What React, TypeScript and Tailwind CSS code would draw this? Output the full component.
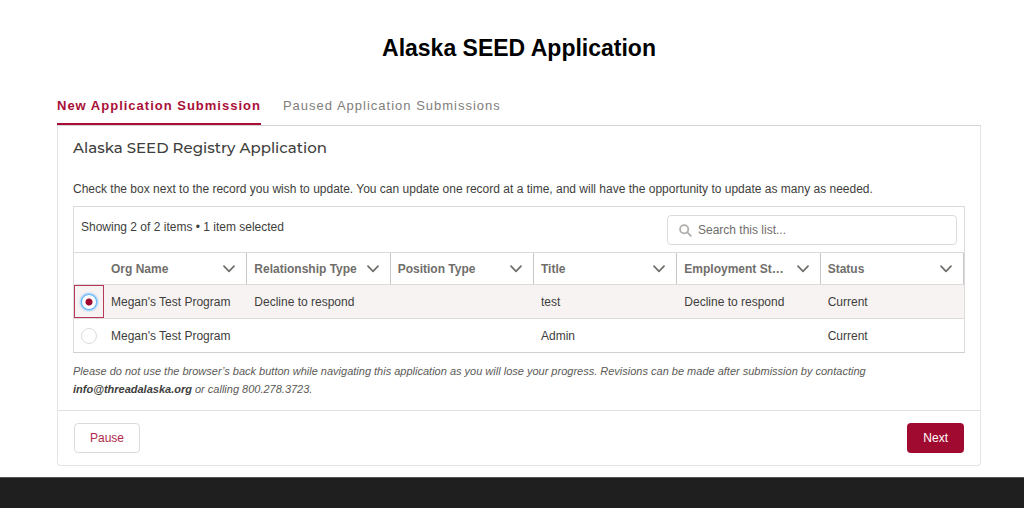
import { useState } from 'react'

const columns = [
  'Org Name',
  'Relationship Type',
  'Position Type',
  'Title',
  'Employment St…',
  'Status',
]

const records = [
  {
    id: 'record-1',
    cells: ["Megan's Test Program", 'Decline to respond', '', 'test', 'Decline to respond', 'Current'],
  },
  {
    id: 'record-2',
    cells: ["Megan's Test Program", '', '', 'Admin', '', 'Current'],
  },
]

function Chevron() {
  return (
    <svg viewBox="0 0 12 8" className="h-2 w-3" fill="none" stroke="#706e6b" strokeWidth="1.7" aria-hidden="true">
      <path d="M1 1.2 L6 6.3 L11 1.2" strokeLinecap="round" strokeLinejoin="round" />
    </svg>
  )
}

function SearchIcon() {
  return (
    <svg viewBox="0 0 13 13" className="h-[13px] w-[13px] shrink-0" fill="none" stroke="#b0adab" strokeWidth="1.8" aria-hidden="true">
      <circle cx="5.2" cy="5.2" r="4.1" />
      <path d="M8.4 8.4 L11.8 11.8" strokeLinecap="round" />
    </svg>
  )
}

export default function App() {
  const [selected, setSelected] = useState('record-1')

  return (
    <div className="flex min-h-screen flex-col bg-white font-['Liberation_Sans',Arial,sans-serif] text-[#3e3e3c]">
      <main className="pt-8 pr-[43px] pb-[11px] pl-[57px]">
        <h1 className="text-center text-[23px] leading-8 font-bold text-black">Alaska SEED Application</h1>

        {/* Tabs */}
        <nav className="mt-[22px] flex gap-[22px] border-b border-[#d4d4d4] text-[13px]">
          <a
            href="#new"
            className="border-b-2 border-[#a90e37] pt-2.5 pb-[7px] leading-5 font-bold tracking-[1px] text-[#a90e37]"
          >
            New Application Submission
          </a>
          <a href="#paused" className="pt-2.5 pb-[7px] leading-5 tracking-[1px] text-[#807e7b]">
            Paused Application Submissions
          </a>
        </nav>

        {/* Application card */}
        <section className="rounded-b border border-t-0 border-[#e4e4e4]">
          <div className="px-[15px] py-3">
            <h2 className="font-[Montserrat,Inter,sans-serif] text-[15px] leading-5 font-medium">
              Alaska SEED Registry Application
            </h2>
            <p className="mt-[21px] text-xs leading-5">
              Check the box next to the record you wish to update. You can update one record at a time, and will
              have the opportunity to update as many as needed.
            </p>

            <div className="mt-[7px] border border-[#dddbda] border-b-[#d0d0d0]">
              <div className="flex items-center justify-between px-[7px] pt-2 pb-[7px]">
                <p className="pb-1.5 text-xs leading-5">Showing 2 of 2 items • 1 item selected</p>
                <label className="flex h-[30px] w-[290px] items-center gap-1.5 rounded border border-[#dddbda] px-[11px]">
                  <SearchIcon />
                  <input
                    type="text"
                    aria-label="Search this list"
                    placeholder="Search this list..."
                    className="min-w-0 flex-1 text-xs outline-none placeholder:text-[#706e6b]"
                  />
                </label>
              </div>

              <table className="w-full table-fixed border-collapse text-left text-xs">
                <thead>
                  <tr className="border-y border-[#dddbda]">
                    <th className="w-[30px]" aria-label="Select" />
                    {columns.map((column) => (
                      <th key={column} className="h-8 p-0 font-bold text-[#706e6b]">
                        <div className="flex h-[31px] items-center justify-between border-r border-[#c9c7c5] pr-[11px] pl-[7px]">
                          <span className="whitespace-nowrap">{column}</span>
                          <button type="button" className="shrink-0" aria-label={`${column} actions`}>
                            <Chevron />
                          </button>
                        </div>
                      </th>
                    ))}
                  </tr>
                </thead>
                <tbody>
                  {records.map((record) => {
                    const active = record.id === selected
                    return (
                      <tr
                        key={record.id}
                        className={active ? 'border-b border-[#dddbda] bg-[#f8f3f3]' : ''}
                      >
                        <td className="p-0">
                          <div
                            className={
                              active
                                ? 'flex h-[33px] items-center justify-center border border-[#b8385a]'
                                : 'flex h-[33px] items-center justify-center'
                            }
                          >
                            <input
                              type="radio"
                              name="record"
                              aria-label={`Select row ${record.id}`}
                              checked={active}
                              onChange={() => setSelected(record.id)}
                              className="h-4 w-4 appearance-none rounded-full border border-[#dddbda] bg-white checked:border-[#5eb4ff] checked:bg-[radial-gradient(circle,#a00a30_3px,#ffffff_4px)] checked:shadow-[0_0_3px_#1b96ff]"
                            />
                          </div>
                        </td>
                        {record.cells.map((cell, i) => (
                          <td key={columns[i]} className="px-[7px] py-0 whitespace-nowrap">
                            {cell}
                          </td>
                        ))}
                      </tr>
                    )
                  })}
                </tbody>
              </table>
            </div>

            <p className="mt-[9px] text-[11px] leading-[18px] text-[#5c5a58] italic">
              Please do not use the browser’s back button while navigating this application as you will lose your
              progress. Revisions can be made after submission by contacting{' '}
              <a href="mailto:info@threadalaska.org" className="font-bold text-[#3e3e3c]">
                info@threadalaska.org
              </a>{' '}
              or calling 800.278.3723.
            </p>
          </div>

          <div className="flex justify-between border-t border-[#e0e0e0] px-4 py-3">
            <button
              type="button"
              className="h-[30px] rounded border border-[#dddbda] bg-white px-[15px] text-xs text-[#b02a4c]"
            >
              Pause
            </button>
            <button type="button" className="h-[30px] rounded bg-[#a00a30] px-4 text-xs text-white">
              Next
            </button>
          </div>
        </section>
      </main>

      <footer className="flex-1 border-t border-[#555555] bg-[#1f1f1f]" />
    </div>
  )
}
